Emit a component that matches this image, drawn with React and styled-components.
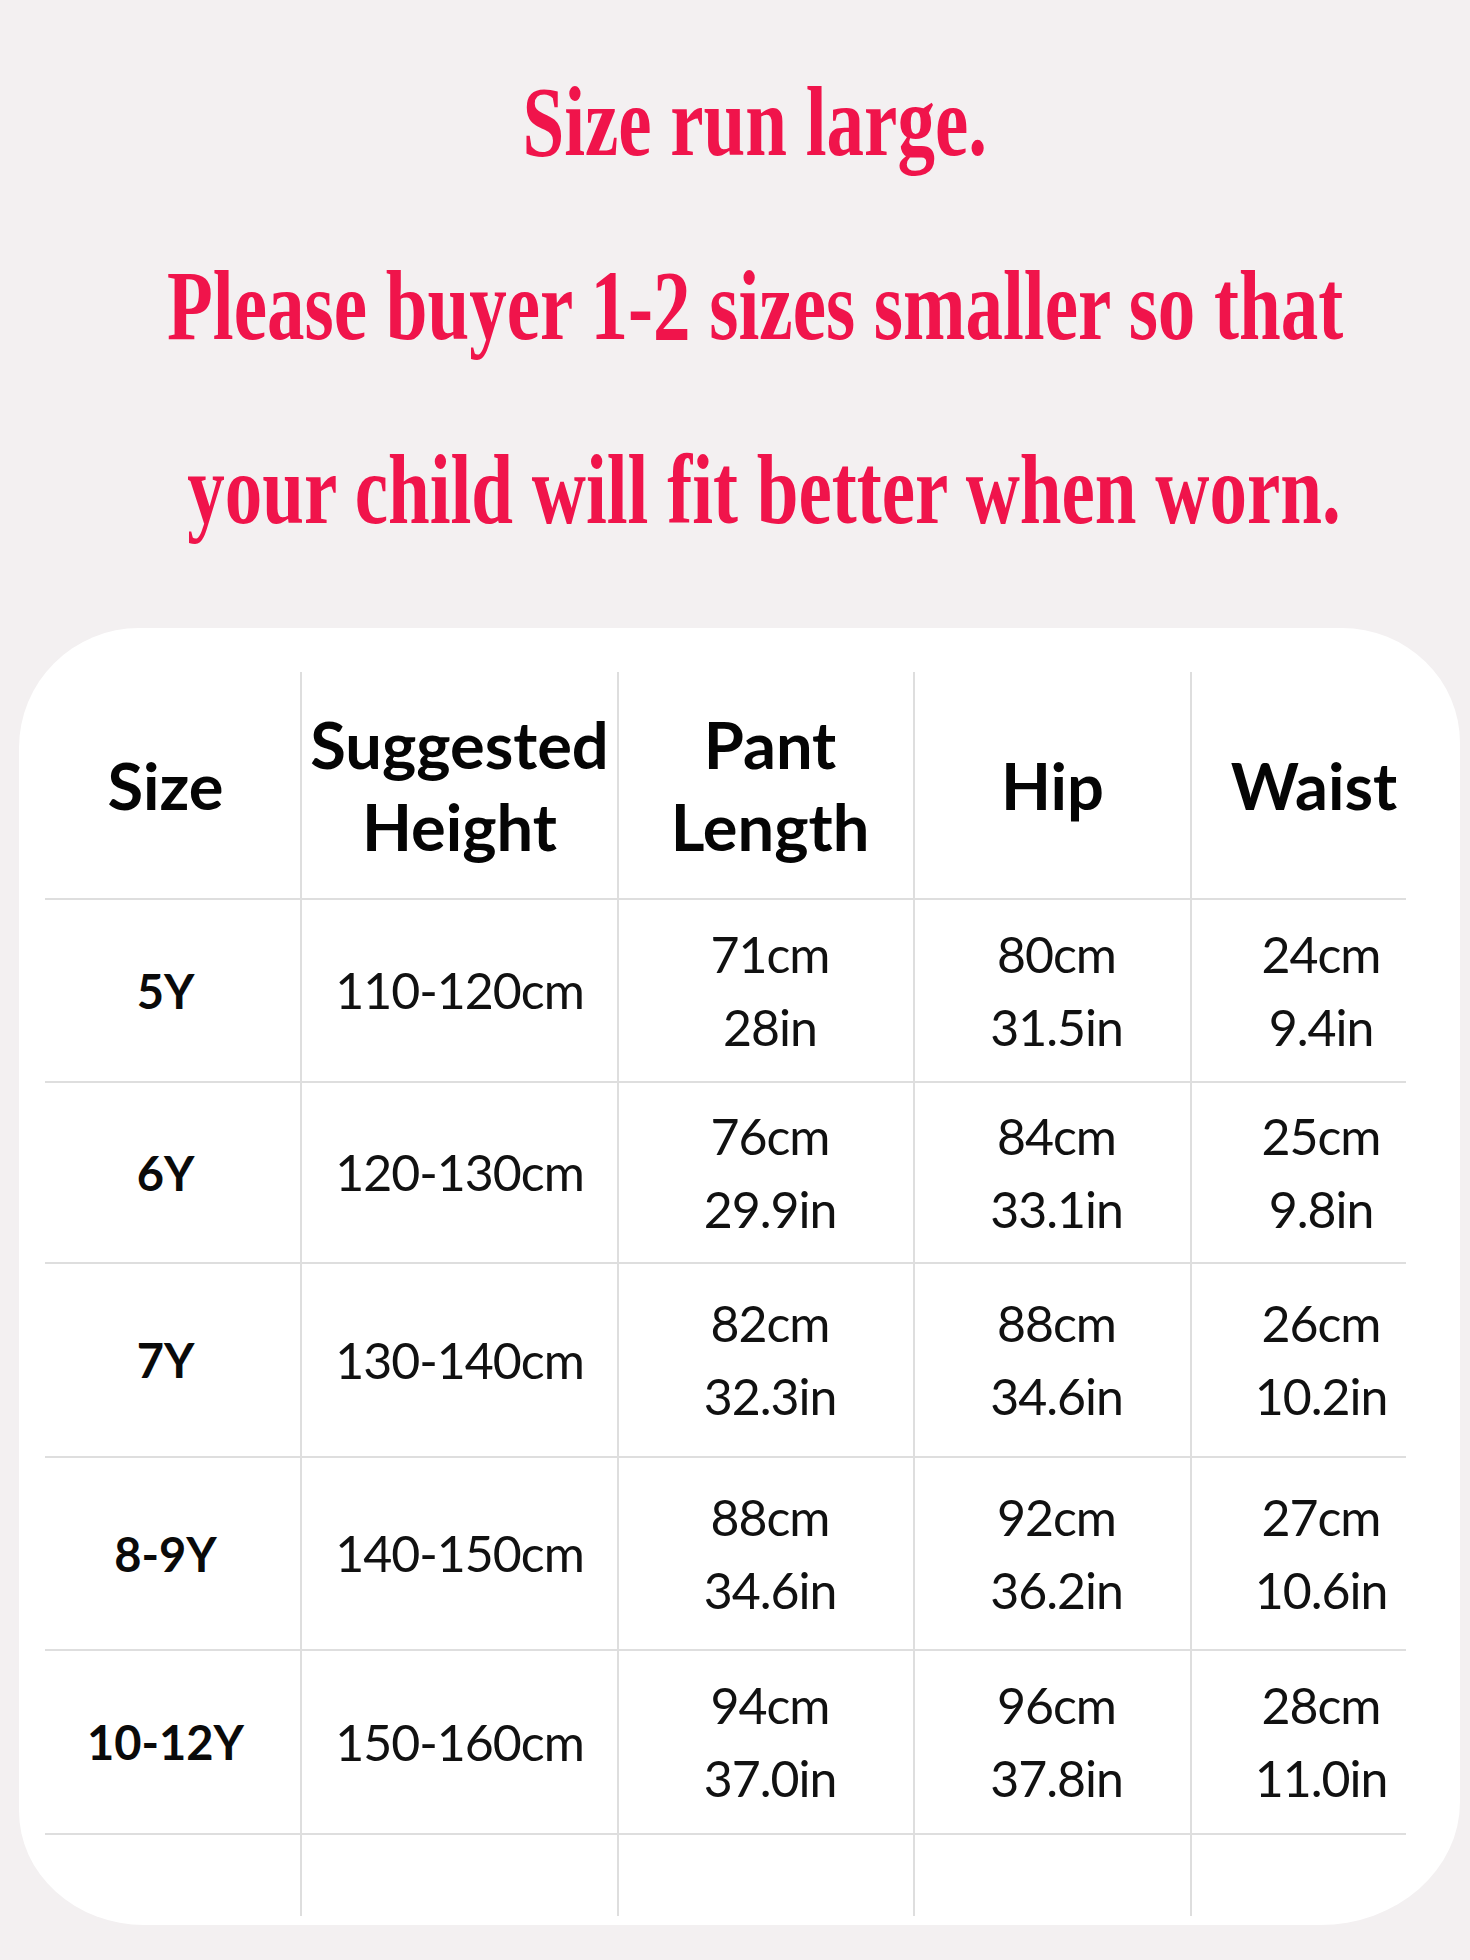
import React from 'react';
import styled, { createGlobalStyle } from 'styled-components';

const GlobalStyle = createGlobalStyle`
    html, body {
        margin: 0;
        padding: 0;
        background: #f3f0f1;
    }
    * {
        box-sizing: border-box;
    }
`;

const Page = styled.div`
    width: 1470px;
    min-height: 1960px;
    background: #f3f0f1;
    padding-top: 30px;
    overflow: hidden;
`;

const Notice = styled.div`
    display: flex;
    flex-direction: column;
    padding-left: 40px;
    font-family: 'Liberation Serif', 'Times New Roman', serif;
    font-weight: 700;
    font-size: 100px;
    line-height: 184px;
    color: #f0144b;
`;

const NoticeLine = styled.div`
    display: flex;
    justify-content: center;
    white-space: nowrap;
    padding-left: ${(p) => p.$shift || 0}px;
`;

const Squeeze = styled.span`
    display: inline-block;
    transform: scaleX(${(p) => p.$k});
`;

const Card = styled.div`
    margin: 46px 0 0 19px;
    width: 1441px;
    height: 1297px;
    background: #ffffff;
    border-radius: 120px 118px 140px 125px / 120px 115px 123px 114px;
    padding: 44px 54px 9px 26px;
`;

const Grid = styled.div`
    display: grid;
    grid-template-columns: 257px 317px 296px 277px 214px;
    grid-template-rows: 228px 183px 181px 194px 193px 184px 81px;
`;

const Cell = styled.div`
    display: flex;
    flex-direction: column;
    align-items: center;
    justify-content: center;
    text-align: center;
    border-right: ${(p) => (p.$last ? 'none' : '2px solid #dedede')};
    border-bottom: ${(p) => (p.$bottom ? '2px solid #dedede' : 'none')};
    padding-left: ${(p) => (p.$last ? (p.$head ? '30px' : '44px') : p.$mid ? '8px' : '0')};
    padding-right: ${(p) => (p.$first ? '14px' : '0')};
    color: #111;
`;

const HeadText = styled.div`
    font-family: Lato, 'Liberation Sans', sans-serif;
    font-weight: 700;
    font-size: 65px;
    line-height: 82px;
    color: #050505;
`;

const SizeText = styled.div`
    font-family: Lato, 'Liberation Sans', sans-serif;
    font-weight: 700;
    font-size: 47px;
    color: #0a0a0a;
`;

const ValueText = styled.div`
    font-family: Lato, 'Liberation Sans', sans-serif;
    font-weight: 400;
    font-size: 50px;
    line-height: 73px;
    color: #111;
    letter-spacing: -1px;
`;

const headers = [
    ['Size'],
    ['Suggested', 'Height'],
    ['Pant', 'Length'],
    ['Hip'],
    ['Waist'],
];

const rows = [
    { size: '5Y', height: '110-120cm', pant: ['71cm', '28in'], hip: ['80cm', '31.5in'], waist: ['24cm', '9.4in'] },
    { size: '6Y', height: '120-130cm', pant: ['76cm', '29.9in'], hip: ['84cm', '33.1in'], waist: ['25cm', '9.8in'] },
    { size: '7Y', height: '130-140cm', pant: ['82cm', '32.3in'], hip: ['88cm', '34.6in'], waist: ['26cm', '10.2in'] },
    { size: '8-9Y', height: '140-150cm', pant: ['88cm', '34.6in'], hip: ['92cm', '36.2in'], waist: ['27cm', '10.6in'] },
    { size: '10-12Y', height: '150-160cm', pant: ['94cm', '37.0in'], hip: ['96cm', '37.8in'], waist: ['28cm', '11.0in'] },
];

const Lines = ({ items }) => items.map((t) => <ValueText key={t}>{t}</ValueText>);

const App = () => {
    return (
        <Page>
            <GlobalStyle />
            <Notice>
                <NoticeLine>
                    <Squeeze $k={0.75}>Size run large.</Squeeze>
                </NoticeLine>
                <NoticeLine>
                    <Squeeze $k={0.75}>Please buyer 1-2 sizes smaller so that</Squeeze>
                </NoticeLine>
                <NoticeLine $shift={18}>
                    <Squeeze $k={0.75}>your child will fit better when worn.</Squeeze>
                </NoticeLine>
            </Notice>
            <Card>
                <Grid>
                    {headers.map((h, i) => (
                        <Cell key={h[0]} $bottom $head $first={i === 0} $mid={i === 2} $last={i === 4}>
                            {h.map((t) => (
                                <HeadText key={t}>{t}</HeadText>
                            ))}
                        </Cell>
                    ))}
                    {rows.map((r) => (
                        <React.Fragment key={r.size}>
                            <Cell $bottom $first>
                                <SizeText>{r.size}</SizeText>
                            </Cell>
                            <Cell $bottom>
                                <ValueText>{r.height}</ValueText>
                            </Cell>
                            <Cell $bottom $mid>
                                <Lines items={r.pant} />
                            </Cell>
                            <Cell $bottom $mid>
                                <Lines items={r.hip} />
                            </Cell>
                            <Cell $bottom $last>
                                <Lines items={r.waist} />
                            </Cell>
                        </React.Fragment>
                    ))}
                    {[0, 1, 2, 3, 4].map((i) => (
                        <Cell key={i} $last={i === 4} />
                    ))}
                </Grid>
            </Card>
        </Page>
    );
};

export default App;
